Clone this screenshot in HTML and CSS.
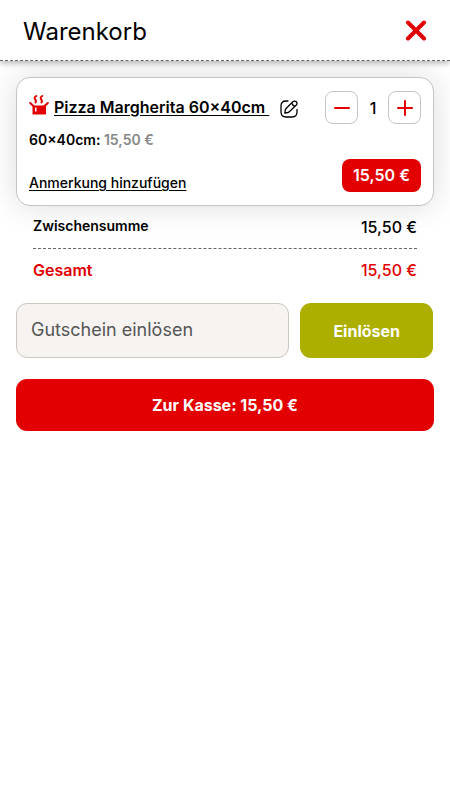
FILE: index.html
```html
<!DOCTYPE html>
<html lang="de">
<head>
<meta charset="utf-8">
<meta name="viewport" content="width=device-width, initial-scale=1">
<title>Warenkorb</title>
<link rel="stylesheet" href="styles.css">
</head>
<body>
<header class="header">
  <h1 class="header-title">Warenkorb</h1>
  <button class="close" type="button" aria-label="Schließen">
    <svg width="22" height="22" viewBox="0 0 22 22" fill="none" stroke="currentColor" stroke-width="4" stroke-linecap="round"><path d="M3 2.500l16 16M19 2.500l-16 16"/></svg>
  </button>
</header>
<main class="cart">
  <article class="item">
    <div class="item-head">
      <svg class="pot" width="20" height="20" viewBox="0 0 20 20" fill="none" stroke="currentColor" stroke-width="2" stroke-linecap="round"><path d="M7.300 1C3 3.500 8.500 4.500 6.500 7.500M13.300 1C9 3.500 14.500 4.500 12.500 7.500M1.200 8L4.500 11M18.800 8L15.500 11"/><path fill="currentColor" stroke="none" fill-rule="evenodd" d="M3.500 10.500h13.500v9h-13.500zM6 12.500v4h1.500v-4z"/></svg>
      <a class="item-name" href="#artikel">Pizza Margherita 60×40cm&nbsp;</a>
      <button class="edit" type="button" aria-label="Bearbeiten">
        <svg width="18" height="18" viewBox="0 0 18 18" fill="none" stroke="currentColor" stroke-width="1.300" stroke-linecap="round" stroke-linejoin="round"><path d="M8 1H6Q1 1 1 6v6q0 5 5 5h6q5 0 5-5V9.500"/><path d="M12.800 1.800L6.300 8.200Q5.600 9 5.300 10l-.5 3 3-.5q1-.2 1.800-1l6.500-6.300Q17.800 3.500 16.300 1.800 14.600.3 12.800 1.800zM11.700 3q.8 2.500 3.300 3.300"/></svg>
      </button>
      <div class="stepper">
        <button class="step" type="button" aria-label="Weniger"><svg width="16" height="16" viewBox="0 0 16 16" stroke="currentColor" stroke-width="2" stroke-linecap="round"><path d="M1 8h14"/></svg></button>
        <span class="count">1</span>
        <button class="step" type="button" aria-label="Mehr"><svg width="16" height="16" viewBox="0 0 16 16" stroke="currentColor" stroke-width="2" stroke-linecap="round"><path d="M1 8h14M8 1v14"/></svg></button>
      </div>
    </div>
    <p class="variant">60×40cm: <span class="variant-price">15,50 €</span></p>
    <div class="item-foot">
      <a class="note" href="#anmerkung">Anmerkung hinzufügen</a>
      <span class="price">15,50 €</span>
    </div>
  </article>
  <dl class="totals">
    <div class="total-row"><dt class="subtotal-label">Zwischensumme</dt><dd>15,50 €</dd></div>
    <div class="total-row total-row-final"><dt>Gesamt</dt><dd>15,50 €</dd></div>
  </dl>
  <form class="voucher">
    <input class="voucher-input" type="text" placeholder="Gutschein einlösen" aria-label="Gutschein einlösen">
    <button class="voucher-button" type="button">Einlösen</button>
  </form>
  <button class="checkout" type="button">Zur Kasse: 15,50 €</button>
</main>
</body>
</html>
```
FILE: styles.css
```css
* { box-sizing: border-box; }

body {
  margin: 0;
  background: #fff;
  color: #000;
  font: 500 16px/20px Inter, sans-serif;
}

h1, p, dl, dd { margin: 0; }
a { color: inherit; text-underline-offset: 2px; }
svg { display: block; flex: none; }

button {
  margin: 0;
  padding: 0;
  border: 0;
  background: none;
  color: inherit;
  font: inherit;
  cursor: pointer;
}

.header {
  position: relative;
  z-index: 1;
  display: flex;
  align-items: center;
  justify-content: space-between;
  padding: 15px 23px 13px;
  border-bottom: 1px dashed #666;
  background: #fff;
  box-shadow: 0 2px 6px rgba(0, 0, 0, .3);
}

.header-title {
  padding-top: 2px;
  font-size: 24px;
  line-height: 30px;
  font-weight: 400;
}

.close { color: #e20000; }

.cart { padding: 16px; }

.item {
  padding: 13px 12px;
  border: 1px solid #c4c4c4;
  border-radius: 14px;
  background: #fff;
  box-shadow: 0 0 32px rgba(0, 0, 0, .14);
}

.item-head { display: flex; align-items: center; }
.pot { margin: 0 5px 6px 0; color: #e20000; }

.item-name {
  padding-bottom: 2px;
  font-weight: 600;
  white-space: nowrap;
}

.edit { margin: 2px 0 0 11px; }
.stepper { display: flex; align-items: center; margin-left: auto; }

.step {
  display: grid;
  place-items: center;
  width: 33px;
  height: 33px;
  border: 1px solid #c4c4c4;
  border-radius: 8px;
  color: #e20000;
}

.count { width: 30px; text-align: center; }
.variant { margin-top: 6px; font-size: 14px; font-weight: 600; }
.variant-price { color: #888; }

.item-foot {
  display: flex;
  align-items: flex-end;
  justify-content: space-between;
  margin-top: 9px;
}

.note { font-size: 14px; line-height: 18px; }

.price {
  padding: 6px 11px 7px;
  border-radius: 8px;
  background: #e20000;
  color: #fff;
  font-weight: 600;
}

.totals { padding: 0 17px; }

.total-row {
  display: flex;
  align-items: flex-start;
  justify-content: space-between;
  padding: 11px 0;
}

.total-row-final { border-top: 1px dashed #666; color: #e20000; }
.total-row-final dt { font-weight: 600; }

.subtotal-label {
  font-size: 14px;
  line-height: 18px;
  font-weight: 600;
}

.voucher { display: flex; gap: 11px; margin: 12px 1px 21px 0; }

.voucher-input {
  flex: 1;
  min-width: 0;
  padding: 16px 14px 17px;
  border: 1px solid #ccc8c0;
  border-radius: 11px;
  background: #f7f3f0;
  color: #000;
  font: 400 18px/20px Inter, sans-serif;
}

.voucher-input::placeholder { color: #555; opacity: 1; }

.voucher-button {
  flex: none;
  padding: 0 33px;
  border-radius: 11px;
  background: #acae00;
  color: #fff;
  font-weight: 700;
}

.checkout {
  width: 100%;
  padding: 16px;
  border-radius: 11px;
  background: #e20000;
  color: #fff;
  font-weight: 700;
}
```
